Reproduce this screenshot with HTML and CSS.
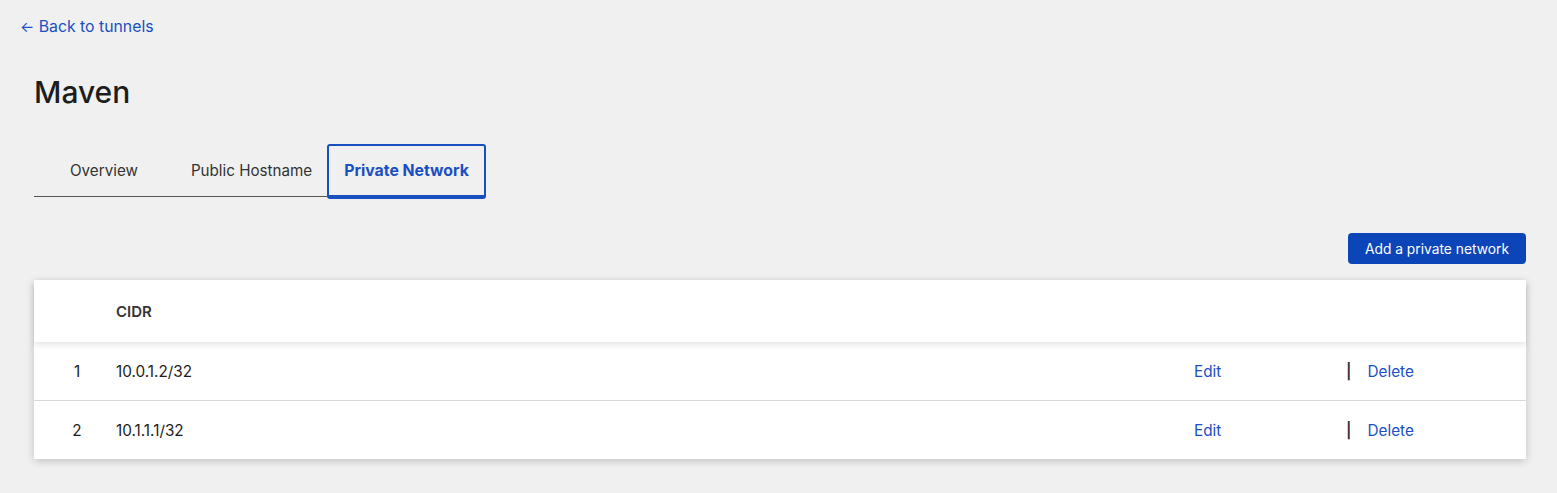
FILE: index.html
```html
<!DOCTYPE html>
<html>
<head>
<meta charset="utf-8">
<link rel="stylesheet" href="styles.css">
</head>
<body>
<div class="page">
  <a class="back" href="#"><span class="arrow">←</span> Back to tunnels</a>
  <h1 class="title">Maven</h1>
  <div class="tabs">
    <div class="tab">Overview</div>
    <div class="tab">Public Hostname</div>
    <div class="tab active">Private Network</div>
  </div>
  <div class="actions">
    <button class="btn">Add a private network</button>
  </div>
  <div class="card">
    <div class="row head">
      <div class="num"></div>
      <div class="cidr">CIDR</div>
      <div></div>
      <div></div>
    </div>
    <div class="row">
      <div class="num">1</div>
      <div class="cidr">10.0.1.2/32</div>
      <div><a class="link" href="#">Edit</a></div>
      <div class="del"><span class="pipe">|</span><a class="link" href="#">Delete</a></div>
    </div>
    <div class="row">
      <div class="num">2</div>
      <div class="cidr">10.1.1.1/32</div>
      <div><a class="link" href="#">Edit</a></div>
      <div class="del"><span class="pipe">|</span><a class="link" href="#">Delete</a></div>
    </div>
  </div>
</div>
</body>
</html>
```

FILE: styles.css
```css
html, body {
  margin: 0;
  padding: 0;
  background: #f0f0f0;
  font-family: Inter, "Noto Sans", sans-serif;
  color: #1d1d1d;
}
.page {
  padding: 16px 31px 34px 34px;
}
.back {
  display: inline-block;
  margin-left: -14px;
  font-size: 15.8px;
  line-height: 20px;
  color: #1a50c2;
  text-decoration: none;
}
.arrow {
  font-size: 15px;
}
.title {
  margin: 37px 0 0 0;
  font-size: 30px;
  line-height: 36px;
  font-weight: 500;
  color: #1d1d1d;
}
.tabs {
  display: flex;
  margin-top: 34px;
  align-items: stretch;
}
.tab {
  padding: 0 35px;
  height: 52px;
  display: flex;
  align-items: center;
  font-size: 15.2px;
  color: #333;
  border-bottom: 1px solid #555;
  margin-bottom: 3px;
}
.tab:first-child {
  padding-left: 36px;
  padding-right: 53px;
}
.tab:nth-child(2) {
  padding-left: 0;
  padding-right: 15px;
}
.tab.active {
  border: 2px solid #1a4fc2;
  border-bottom-width: 4px;
  border-radius: 3px;
  margin-bottom: 0;
  padding: 0 15px;
  height: 49px;
  font-size: 15.8px;
  font-weight: 700;
  color: #1a4fc2;
}
.actions {
  display: flex;
  justify-content: flex-end;
  margin-top: 33px;
}
.btn {
  background: #0c45b8;
  color: #fff;
  border: none;
  border-radius: 4px;
  height: 31px;
  padding: 0 17px;
  font-family: Inter, "Noto Sans", sans-serif;
  font-size: 13.8px;
}
.card {
  margin-top: 16px;
  background: #fff;
  box-shadow: 0 2px 8px rgba(0,0,0,0.2);
}
.row {
  display: grid;
  grid-template-columns: 82px 1078px 152px 1fr;
  align-items: center;
  height: 58px;
  font-size: 15.3px;
  color: #1d1d1d;
  border-top: 1px solid #d8d8d8;
}
.row.head {
  height: 62px;
  border-top: none;
  font-size: 15px;
  font-weight: 600;
  color: #333;
  position: relative;
  box-shadow: 0 3px 6px rgba(0,0,0,0.10);
}
.row.head + .row {
  border-top: none;
}
.num {
  text-align: center;
  padding-left: 4px;
}
.link {
  color: #1a50c2;
  text-decoration: none;
}
.del {
  display: flex;
  align-items: center;
}
.pipe {
  margin-right: 16px;
  color: #333;
  font-weight: 600;
}
```
